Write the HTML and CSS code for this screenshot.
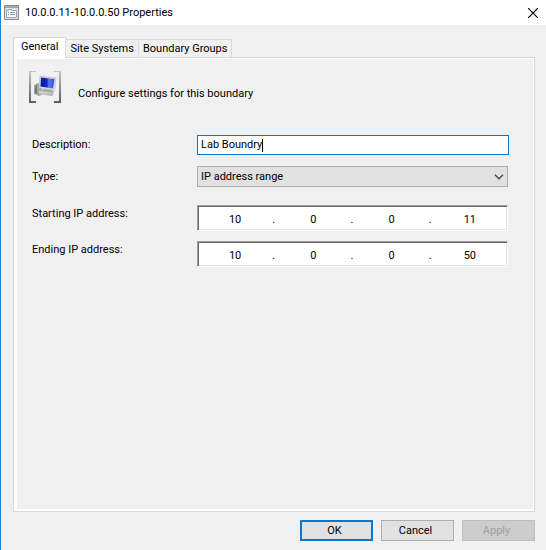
FILE: index.html
```html
<!DOCTYPE html>
<html lang="en">
<head>
<meta charset="utf-8">
<title>10.0.0.11-10.0.0.50 Properties</title>
<link rel="stylesheet" href="styles.css">
</head>
<body>
<form class="dialog">
  <header class="titlebar">
    <svg class="app-icon" width="16" height="16" viewBox="0 0 16 16" aria-hidden="true">
      <path d="M.5.5h14v14H.5z" fill="#dfe3e6" stroke="#858b90"/>
      <path d="M1 1h13v2H1z" fill="#a3a9ae"/>
      <path d="M2.500 5.500h2v-1h3v1h5v7h-10z" fill="#fff" stroke="#9aa4ab"/>
      <path d="M4 7h1v1H4zM4 9h1v1H4z" fill="#2caee0"/>
      <path d="M6 7h5v1H6zM6 9h5v1H6z" fill="#8e999f"/>
      <path d="M6 14h3v1H6z" fill="#19b9f0"/>
      <path d="M10 14h2v1h-2z" fill="#7d8990"/>
    </svg>
    <h1 class="title">10.0.0.11-10.0.0.50 Properties</h1>
    <button class="close" type="button" aria-label="Close">
      <svg width="10" height="10" viewBox="0 0 10 10"><path d="M0 0l10 10M10 0L0 10" stroke="#000" stroke-width="1.200"/></svg>
    </button>
  </header>
  <main class="content">
    <nav class="tabs" role="tablist">
      <button class="tab active" type="button" role="tab" aria-selected="true">General</button>
      <button class="tab" type="button" role="tab">Site Systems</button>
      <button class="tab" type="button" role="tab">Boundary Groups</button>
    </nav>
    <section class="panel">
      <div class="intro">
        <svg width="32" height="32" viewBox="0 0 32 32" aria-hidden="true">
          <defs>
            <linearGradient id="bracket" x1="0" y1="0" x2="0" y2="1"><stop offset="0" stop-color="#c4c4c4"/><stop offset="1" stop-color="#5c5c5c"/></linearGradient>
            <linearGradient id="screen" x1="0" y1="0" x2="1" y2="0"><stop offset="0" stop-color="#0c16a0"/><stop offset=".45" stop-color="#1526c8"/><stop offset=".6" stop-color="#5d7cf0"/><stop offset="1" stop-color="#2c48dc"/></linearGradient>
            <linearGradient id="case" x1="0" y1="0" x2="0" y2="1"><stop offset="0" stop-color="#e4e4e4"/><stop offset="1" stop-color="#a4a4a4"/></linearGradient>
          </defs>
          <path d="M0 0h7v1H2v29h5v2H0zM32 0h-7v1h5v29h-5v2h7z" fill="url(#bracket)"/>
          <path d="M5 14l4-2 4 3v9l-3 1-5-2z" fill="#a4a8a6"/>
          <path d="M6 15l2-1v9l-2-1z" fill="#6f7672"/>
          <path d="M6 15h1v2H6z" fill="#53b94d"/>
          <path d="M15 18h7l3 3-3 3-8-1-2-3z" fill="#a9acae"/>
          <path d="M11 5l16 2-1.500 12.500-15.500-2.500z" fill="#d9dcdf" stroke="#adb1b5" stroke-width=".5"/>
          <path d="M12 6.500l13.500 1.500-1.500 9.500-12.500-2z" fill="url(#screen)"/>
          <path d="M10 20l14 2 1 1-2 2-13-2z" fill="url(#case)"/>
        </svg>
        <p class="intro-text">Configure settings for this boundary</p>
      </div>
      <div class="fields">
        <label for="description">Description:</label>
        <div class="edit"><input id="description" type="text" value="Lab Boundry"><span class="caret"></span></div>
        <label for="type">Type:</label>
        <div class="combo">
          <select id="type"><option>IP address range</option></select>
          <svg class="chevron" width="10" height="6" viewBox="0 0 10 6" aria-hidden="true"><path d="M1 .8l4 4 4-4" fill="none" stroke="#444" stroke-width="1.300"/></svg>
        </div>
      </div>
      <div class="fields addresses">
        <label for="start1">Starting IP address:</label>
        <div class="ip">
          <input id="start1" value="10" aria-label="Starting IP address, part 1"><span>.</span>
          <input value="0" aria-label="Starting IP address, part 2"><span>.</span>
          <input value="0" aria-label="Starting IP address, part 3"><span>.</span>
          <input value="11" aria-label="Starting IP address, part 4">
        </div>
        <label for="end1">Ending IP address:</label>
        <div class="ip">
          <input id="end1" value="10" aria-label="Ending IP address, part 1"><span>.</span>
          <input value="0" aria-label="Ending IP address, part 2"><span>.</span>
          <input value="0" aria-label="Ending IP address, part 3"><span>.</span>
          <input value="50" aria-label="Ending IP address, part 4">
        </div>
      </div>
    </section>
  </main>
  <footer class="actions">
    <button class="btn default" type="button">OK</button>
    <button class="btn" type="button">Cancel</button>
    <button class="btn" type="button" disabled>Apply</button>
  </footer>
</form>
</body>
</html>
```
FILE: styles.css
```css
* { box-sizing: border-box; }

body {
  margin: 0;
  background: #f0f0f0;
  color: #000;
  font: 11px/16px "Roboto", sans-serif;
}

button, input, select { font: inherit; color: inherit; border-radius: 0; margin: 0; }

.dialog {
  min-height: 100vh;
  display: flex;
  flex-direction: column;
  border-left: 1px solid #1883d7;
}

.titlebar {
  display: flex;
  align-items: center;
  height: 25px;
  padding: 0 8px 0 3px;
  background: #fff;
}

.title {
  flex: 1;
  margin: 0 0 0 5px;
  font: inherit;
}

.close { display: flex; padding: 0; border: 0; background: none; }

.content {
  flex: 1;
  display: flex;
  flex-direction: column;
  padding: 12px 11px 0 12px;
}

.tabs { display: flex; align-items: flex-end; height: 20px; }

.tab {
  height: 18px;
  padding: 0 4px;
  border: 1px solid #d9d9d9;
  border-left: 0;
  border-bottom: 0;
  background: #f0f0f0;
  white-space: nowrap;
}

.tab.active {
  height: 21px;
  margin-bottom: -1px;
  padding: 0 7px 3px;
  border-left: 1px solid #d9d9d9;
  background: #fff;
  z-index: 1;
}

.panel {
  flex: 1;
  padding: 10px 24px 0 15px;
  border: 1px solid #d9d9d9;
  background: #f0f0f0;
  box-shadow: inset 3px 1px #fff, inset -1px -2px #fff;
}

.intro { display: flex; align-items: center; gap: 17px; padding-top: 3px; }

.intro-text { margin: 13px 0 0; }

.fields {
  display: grid;
  grid-template-columns: 165px minmax(0, 1fr);
  row-gap: 11px;
  align-items: center;
  padding: 32px 2px 0 3px;
}

.edit {
  display: flex;
  align-items: center;
  height: 20px;
  margin-right: -1px;
  padding-left: 3px;
  border: 1px solid #0078d7;
  background: #fff;
}

.edit input { padding: 0; border: 0; outline: 0; background: none; field-sizing: content; }

.caret { width: 1px; height: 13px; background: #000; }

.combo { display: grid; align-items: center; }

.combo select {
  grid-area: 1 / 1;
  width: 100%;
  height: 21px;
  padding: 0 3px;
  border: 1px solid #adadad;
  background: #e1e1e1;
  appearance: none;
}

.chevron { grid-area: 1 / 1; justify-self: end; margin-right: 4px; pointer-events: none; }

.addresses { row-gap: 10px; align-items: start; padding-top: 18px; }

.addresses label { padding-top: 1px; }

.ip {
  display: flex;
  align-items: center;
  height: 26px;
  padding: 4px 0 0;
  border: 1px solid;
  border-color: #a0a0a0 #fff #fff #a0a0a0;
  background: #fff;
  box-shadow: inset 1px 1px #696969, inset -1px -1px #e3e3e3;
}

.ip input {
  flex: 1;
  min-width: 0;
  padding: 0;
  border: 0;
  background: none;
  text-align: center;
}

.ip span { width: 4px; }

.actions {
  display: flex;
  justify-content: flex-end;
  gap: 8px;
  padding: 8px 11px 9px;
}

.btn {
  width: 73px;
  height: 21px;
  padding: 0 4px 0 0;
  border: 1px solid #adadad;
  background: #e1e1e1;
}

.btn.default { border: 2px solid #0078d7; }

.btn:disabled { border-color: #bfbfbf; background: #ccc; color: #a0a0a0; }
```
